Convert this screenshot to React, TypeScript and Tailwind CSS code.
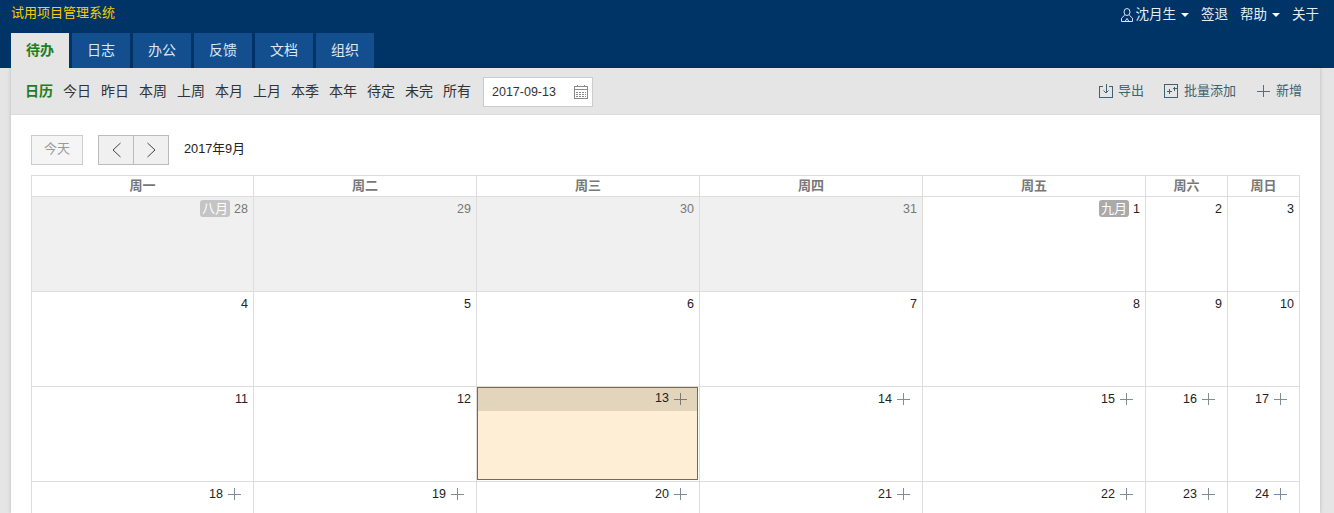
const font = "font-['Liberation_Sans','Noto_Sans_CJK_SC',sans-serif]";

const tabs = ["待办", "日志", "办公", "反馈", "文档", "组织"];
const filters = ["今日", "昨日", "本周", "上周", "本月", "上月", "本季", "本年", "待定", "未完", "所有"];
const weekdays = ["周一", "周二", "周三", "周四", "周五", "周六", "周日"];
const colClass = "grid-cols-[222px_223px_223px_223px_223px_82px_72px]";

type Day = { n: number; past?: boolean; month?: string; monthDim?: boolean; plus?: boolean; today?: boolean };

const days: Day[] = [
  { n: 28, past: true, month: "八月", monthDim: true },
  { n: 29, past: true },
  { n: 30, past: true },
  { n: 31, past: true },
  { n: 1, month: "九月" },
  { n: 2 },
  { n: 3 },
  { n: 4 },
  { n: 5 },
  { n: 6 },
  { n: 7 },
  { n: 8 },
  { n: 9 },
  { n: 10 },
  { n: 11 },
  { n: 12 },
  { n: 13, plus: true, today: true },
  { n: 14, plus: true },
  { n: 15, plus: true },
  { n: 16, plus: true },
  { n: 17, plus: true },
  { n: 18, plus: true },
  { n: 19, plus: true },
  { n: 20, plus: true },
  { n: 21, plus: true },
  { n: 22, plus: true },
  { n: 23, plus: true },
  { n: 24, plus: true },
];

function Plus({ className }: { className?: string }) {
  return (
    <svg width="14" height="14" viewBox="0 0 14 14" className={className}>
      <path d="M7.5 1v12M1 7.5h13" stroke="currentColor" strokeWidth="1" fill="none" shapeRendering="crispEdges" />
    </svg>
  );
}

function Caret() {
  return <span className="ml-[5px] inline-block h-0 w-0 border-x-[4px] border-t-[4px] border-x-transparent border-t-white" />;
}

function UserIcon() {
  return (
    <svg width="12" height="14" viewBox="0 0 12 14" fill="none" stroke="#d8e6f3" strokeWidth="1">
      <ellipse cx="6" cy="4" rx="3" ry="3.5" />
      <path d="M3.8 7L0.5 10.2V13.5H11.5V10.2L8.2 7M4 13.5L6 10.5L8 13.5" />
    </svg>
  );
}

function CalendarIcon() {
  return (
    <svg width="14" height="14" viewBox="0 0 14 14" fill="none" stroke="#8a8a8a" strokeWidth="1" shapeRendering="crispEdges">
      <rect x="0.5" y="1.5" width="13" height="12" />
      <path d="M0.5 4.5H13.5M3.5 0V2M10.5 0V2" />
      <path d="M2 7.5H12M2 9.5H12M2 11.5H12" strokeDasharray="2 1" />
    </svg>
  );
}

function ExportIcon() {
  return (
    <svg width="14" height="14" viewBox="0 0 14 14" fill="none" stroke="#3f6172" strokeWidth="1">
      <path d="M4 2.5H0.5V13.5H13.5V2.5H10" shapeRendering="crispEdges" />
      <path d="M7 0V9" shapeRendering="crispEdges" />
      <path d="M4.5 6.5L7 9L9.5 6.5" />
    </svg>
  );
}

function BatchIcon() {
  return (
    <svg width="14" height="14" viewBox="0 0 14 14" fill="none" stroke="#3f6172" strokeWidth="1" shapeRendering="crispEdges">
      <rect x="0.5" y="0.5" width="13" height="13" />
      <path d="M2.5 7.5H7.5M5 5V10M8.5 4.5H12.5M10.5 2.5V6.5" />
    </svg>
  );
}

function Chevron({ left }: { left?: boolean }) {
  return (
    <svg width="9" height="16" viewBox="0 0 9 16" fill="none" stroke="#444" strokeWidth="1">
      <path d={left ? "M8.5 1L1 8L8.5 15" : "M0.5 1L8 8L0.5 15"} />
    </svg>
  );
}

function DayCell({ day }: { day: Day }) {
  const dark = day.past ? "text-[#777]" : "text-[#222]";
  const pad = day.today ? "pr-[10px]" : day.plus ? "pr-[12px]" : "pr-[5px]";
  const height = day.today ? "h-[21px]" : "h-[23px]";
  const head = (
    <div className={`flex items-center justify-end text-[12.5px] ${height} ${pad} ${dark}`}>
      {day.month && (
        <span className={`mr-[4px] rounded-[3px] px-[2px] text-[13px] leading-[17px] text-white ${day.monthDim ? "bg-[#c4c4c4]" : "bg-[#aaa]"}`}>
          {day.month}
        </span>
      )}
      <span className={day.today ? "" : "mt-[2px]"}>{day.n}</span>
      {day.plus && <Plus className={`ml-[4px] ${day.today ? "text-[#7d7a72]" : "text-[#7f8c99]"}`} />}
    </div>
  );
  if (day.today) {
    return (
      <div className="h-[95px] border-r border-b border-[#ddd]">
        <div className="mr-[1px] h-[93px] border border-[#7a6a50] bg-[#feeed6]">
          <div className="bg-[#e3d5bb] pb-[2px]">{head}</div>
        </div>
      </div>
    );
  }
  return (
    <div className={`h-[95px] border-r border-b border-[#ddd] ${day.past ? "bg-[#f0f0f0]" : "bg-white"}`}>{head}</div>
  );
}

export default function App() {
  return (
    <div className={`h-[513px] overflow-hidden bg-[#e5e5e5] text-[13px] ${font}`}>
      <header className="h-[68px] bg-[#003366]">
        <div className="flex h-[33px] items-start justify-between pl-[11px] pr-[15px]">
          <div className="pt-[5px] text-[13px] leading-[16px] text-[#ffcc00]">试用项目管理系统</div>
          <div className="flex items-center gap-[12px] pt-[7px] text-[13.5px] leading-[16px] text-[#e3edf6]">
            <div className="flex items-center">
              <UserIcon />
              <span className="ml-[3px]">沈月生</span>
              <Caret />
            </div>
            <span>签退</span>
            <div className="flex items-center">
              <span>帮助</span>
              <Caret />
            </div>
            <span>关于</span>
          </div>
        </div>
        <nav className="flex h-[35px] gap-[3px] pl-[11px]">
          {tabs.map((t, i) => (
            <div
              key={t}
              className={`flex w-[58px] items-center justify-center text-[14px] ${
                i === 0 ? "bg-[#e5e5e5] font-bold text-[#1f7d1f]" : "bg-[#134f8f] text-[#dfe8f1]"
              }`}
            >
              {t}
            </div>
          ))}
        </nav>
      </header>

      <main className="ml-[11px] mr-[14px] h-[445px] bg-white shadow-[0_0_4px_rgba(0,0,0,0.2)]">
        <div className="flex h-[47px] items-center justify-between border-b border-[#dcdcdc] bg-[#e5e5e5] pl-[14px] pr-[18px]">
          <div className="flex items-center">
            <span className="mr-[10px] w-[28px] text-[14px] font-bold text-[#1f7d1f]">日历</span>
            <div className="flex text-[14px]">
              {filters.map((f) => (
                <span key={f} className="w-[38px] text-[#333]">
                  {f}
                </span>
              ))}
            </div>
            <div className="ml-[2px] mt-[1px] flex h-[30px] w-[110px] items-center justify-between border border-[#ccc] bg-white pl-[8px] pr-[4px] text-[12.5px] text-[#333]">
              <span className="pt-[2px]">2017-09-13</span>
              <CalendarIcon />
            </div>
          </div>
          <div className="flex items-center text-[#40626f]">
            <ExportIcon />
            <span className="ml-[5px]">导出</span>
            <span className="ml-[20px]"><BatchIcon /></span>
            <span className="ml-[6px]">批量添加</span>
            <Plus className="ml-[20px] text-[#5b6e78]" />
            <span className="ml-[6px]">新增</span>
          </div>
        </div>

        <div className="px-[20px] pt-[20px]">
          <div className="flex h-[30px] items-center">
            <div className="flex h-[30px] w-[52px] items-center justify-center border border-[#ccc] bg-[#f5f5f5] pb-[2px] text-[#999]">今天</div>
            <div className="ml-[15px] flex h-[30px] border border-[#bbb] bg-[#f0f0f0]">
              <div className="flex w-[35px] items-center justify-center border-r border-[#bbb]"><Chevron left /></div>
              <div className="flex w-[34px] items-center justify-center"><Chevron /></div>
            </div>
            <span className="ml-[15px] pb-[2px] text-[12.75px] text-[#222]">2017年9月</span>
          </div>

          <div className="mt-[10px] w-[1269px] border-l border-t border-[#ddd]">
            <div className={`grid ${colClass}`}>
              {weekdays.map((d) => (
                <div key={d} className="flex h-[21px] items-center justify-center border-r border-b border-[#ddd] text-[13px] font-bold text-[#777]">
                  {d}
                </div>
              ))}
            </div>
            <div className={`grid ${colClass}`}>
              {days.map((d) => (
                <DayCell key={`${d.n}-${d.past}`} day={d} />
              ))}
            </div>
          </div>
        </div>
      </main>
    </div>
  );
}
